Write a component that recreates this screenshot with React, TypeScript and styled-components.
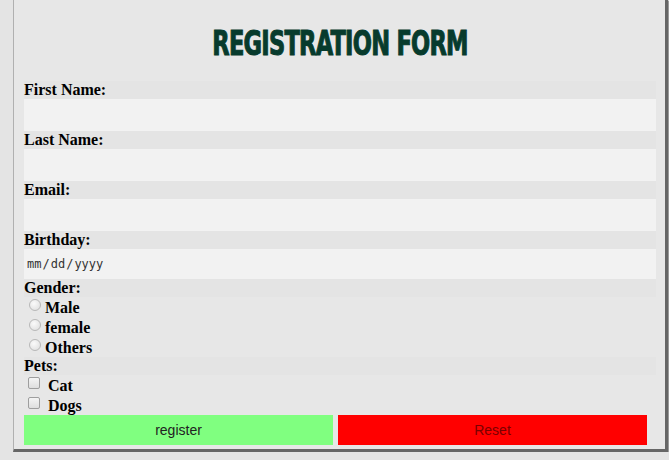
import React from 'react';
import styled, { createGlobalStyle } from 'styled-components';

const GlobalStyle = createGlobalStyle`
  html, body {
    margin: 0;
    padding: 0;
    background: #e4e4e4;
  }
  * {
    box-sizing: border-box;
  }
`;

const Form = styled.form`
  width: 655px;
  margin-left: 13px;
  padding: 0 9px 4px 10px;
  background: #e7e7e7;
  border-left: 1px solid #b0b0b0;
  border-right: 3px solid #666;
  border-bottom: 3px solid #666;
  box-shadow: 1px 1px 1px #9a9a9a;
  font-family: 'Liberation Serif', 'Times New Roman', serif;
  color: #000;
`;

const Title = styled.h1`
  margin: 0;
  height: 81px;
  padding-top: 24px;
  text-align: center;
  font-family: 'DejaVu Sans Condensed', 'Liberation Sans', sans-serif;
  font-weight: 700;
  font-size: 33px;
  line-height: 40px;
  color: #073b2d;
`;

const TitleText = styled.span`
  display: inline-block;
  transform: scaleX(0.76);
  letter-spacing: -1px;
  -webkit-text-stroke: 1px #073b2d;
`;

const Label = styled.label`
  display: block;
  height: 18px;
  line-height: 18px;
  font-size: 16px;
  font-weight: 700;
  background: #e4e4e4;
`;

const TextInput = styled.input<{ $h?: number }>`
  display: block;
  width: 100%;
  height: ${(p) => p.$h ?? 32}px;
  margin: 0;
  padding: 0 2px;
  border: none;
  outline: none;
  background: #f2f2f2;
  font-family: 'DejaVu Sans Mono', monospace;
  font-size: 12px;
  color: #333;

  &::-webkit-calendar-picker-indicator {
    display: none;
  }
`;

const Choice = styled.label<{ $gap: number }>`
  display: flex;
  align-items: center;
  gap: ${(p) => p.$gap}px;
  height: 20px;
  padding-top: 2px;
  font-size: 16px;
  font-weight: 700;
`;

const Radio = styled.input.attrs({ type: 'radio' })`
  appearance: none;
  width: 12px;
  height: 12px;
  margin: -6px 0 0 5px;
  border-radius: 50%;
  border: 1px solid #b8b8b8;
  background: radial-gradient(circle at 40% 35%, #fafafa, #dcdcdc);
`;

const Check = styled.input.attrs({ type: 'checkbox' })`
  appearance: none;
  width: 12px;
  height: 12px;
  margin: -6px 0 0 4px;
  border-radius: 2px;
  border: 1px solid #9e9e9e;
  background: linear-gradient(#f4f4f4, #dedede);
`;

const Buttons = styled.div`
  display: flex;
  gap: 5px;
`;

const Button = styled.button<{ $bg: string; $fg: string }>`
  width: 309px;
  height: 30px;
  border: none;
  margin: 0;
  padding: 0;
  background: ${(p) => p.$bg};
  color: ${(p) => p.$fg};
  font-family: 'Liberation Sans', Arial, sans-serif;
  font-size: 14px;
`;

export default function App() {
  return (
    <>
      <GlobalStyle />
      <Form onSubmit={(e) => e.preventDefault()}>
        <Title>
          <TitleText>REGISTRATION FORM</TitleText>
        </Title>

        <Label htmlFor="fname">First Name:</Label>
        <TextInput id="fname" type="text" />
        <Label htmlFor="lname">Last Name:</Label>
        <TextInput id="lname" type="text" />
        <Label htmlFor="email">Email:</Label>
        <TextInput id="email" type="email" />
        <Label htmlFor="bday">Birthday:</Label>
        <TextInput id="bday" type="date" $h={30} />

        <Label>Gender:</Label>
        <Choice $gap={4}>
          <Radio name="gender" />
          Male
        </Choice>
        <Choice $gap={4}>
          <Radio name="gender" />
          female
        </Choice>
        <Choice $gap={4}>
          <Radio name="gender" />
          Others
        </Choice>

        <Label>Pets:</Label>
        <Choice $gap={8}>
          <Check />
          Cat
        </Choice>
        <Choice $gap={8}>
          <Check />
          Dogs
        </Choice>

        <Buttons>
          <Button type="submit" $bg="#80ff80" $fg="#222">register</Button>
          <Button type="reset" $bg="#ff0000" $fg="#7a0000">Reset</Button>
        </Buttons>
      </Form>
    </>
  );
}
